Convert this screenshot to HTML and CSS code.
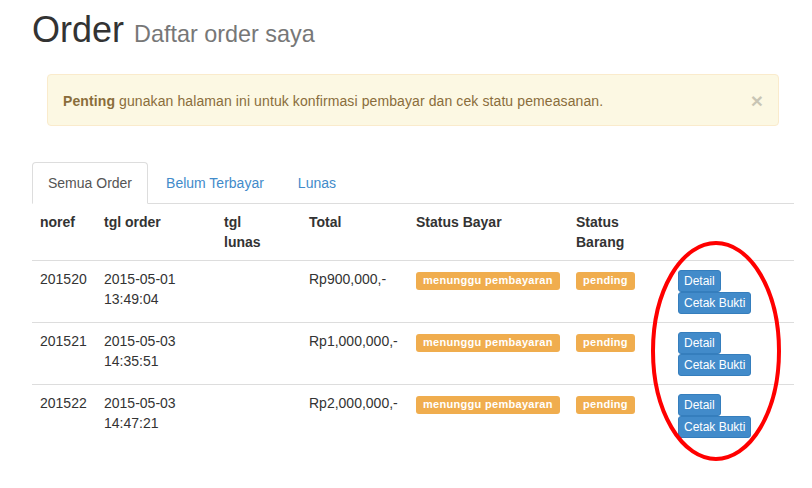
FILE: index.html
```html
<!DOCTYPE html>
<html>
<head>
<meta charset="utf-8">
<title>Order</title>
<link rel="stylesheet" href="styles.css">
</head>
<body>
<div class="page">
  <h1 class="title">Order <small>Daftar order saya</small></h1>

  <div class="alert">
    <span><strong>Penting</strong> gunakan halaman ini untuk konfirmasi pembayar dan cek statu pemeasanan.</span>
    <span class="close">&times;</span>
  </div>

  <ul class="tabs">
    <li class="tab active"><a>Semua Order</a></li>
    <li class="tab"><a>Belum Terbayar</a></li>
    <li class="tab"><a>Lunas</a></li>
  </ul>

  <table class="orders">
    <colgroup>
      <col class="c1"><col class="c2"><col class="c3"><col class="c4"><col class="c5"><col class="c6"><col class="c7">
    </colgroup>
    <tr class="head">
      <th>noref</th>
      <th>tgl order</th>
      <th>tgl<br>lunas</th>
      <th>Total</th>
      <th>Status Bayar</th>
      <th>Status<br>Barang</th>
      <th></th>
    </tr>
    <tr>
      <td>201520</td>
      <td>2015-05-01<br>13:49:04</td>
      <td></td>
      <td>Rp900,000,-</td>
      <td><span class="label">menunggu pembayaran</span></td>
      <td><span class="label">pending</span></td>
      <td><div class="actions"><span class="btn">Detail</span><span class="btn">Cetak Bukti</span></div></td>
    </tr>
    <tr>
      <td>201521</td>
      <td>2015-05-03<br>14:35:51</td>
      <td></td>
      <td>Rp1,000,000,-</td>
      <td><span class="label">menunggu pembayaran</span></td>
      <td><span class="label">pending</span></td>
      <td><div class="actions"><span class="btn">Detail</span><span class="btn">Cetak Bukti</span></div></td>
    </tr>
    <tr>
      <td>201522</td>
      <td>2015-05-03<br>14:47:21</td>
      <td></td>
      <td>Rp2,000,000,-</td>
      <td><span class="label">menunggu pembayaran</span></td>
      <td><span class="label">pending</span></td>
      <td><div class="actions"><span class="btn">Detail</span><span class="btn">Cetak Bukti</span></div></td>
    </tr>
  </table>
</div>

<svg class="annotation" width="812" height="488" viewBox="0 0 812 488" xmlns="http://www.w3.org/2000/svg">
  <ellipse cx="716" cy="351" rx="63" ry="108" fill="none" stroke="#ff0000" stroke-width="4"/>
</svg>
</body>
</html>
```

FILE: styles.css
```css
html, body {
  margin: 0;
  padding: 0;
  background: #fff;
}

body {
  font-family: "Liberation Sans", Arial, Helvetica, sans-serif;
  font-size: 14px;
  line-height: 20px;
  color: #333;
  position: relative;
  width: 812px;
  height: 488px;
  overflow: hidden;
}

.page {
  margin-left: 32px;
  width: 762px;
}

.title {
  margin: 10px 0 24px 0;
  height: 40px;
  font-size: 36px;
  font-weight: normal;
  line-height: 40px;
  color: #333;
}

.title small {
  font-size: 65%;
  line-height: 1;
  color: #777;
}

.alert {
  margin: 0 15px 36px 15px;
  padding: 15px 15px 14px 15px;
  border: 1px solid #faebcc;
  border-radius: 4px;
  background: #fcf8e3;
  color: #8a6d3b;
  display: flex;
  justify-content: space-between;
  align-items: center;
  letter-spacing: 0.1px;
}

.alert strong {
  font-weight: bold;
}

.close {
  font-size: 21px;
  font-weight: bold;
  line-height: 1;
  color: #000;
  opacity: 0.2;
}

.tabs {
  list-style: none;
  margin: 0;
  padding: 0;
  display: flex;
  border-bottom: 1px solid #ddd;
}

.tab {
  margin-bottom: -1px;
}

.tab a {
  display: block;
  padding: 10px 15px;
  margin-right: 2px;
  line-height: 20px;
  border: 1px solid transparent;
  border-radius: 4px 4px 0 0;
  color: #428bca;
}

.tab.active a {
  color: #555;
  background: #fff;
  border-color: #ddd #ddd transparent #ddd;
}

.orders {
  width: 762px;
  border-collapse: collapse;
  table-layout: fixed;
}

.c1 { width: 64px; }
.c2 { width: 120px; }
.c3 { width: 85px; }
.c4 { width: 107px; }
.c5 { width: 160px; }
.c6 { width: 102px; }
.c7 { width: 124px; }

.orders th,
.orders td {
  padding: 8px;
  text-align: left;
  vertical-align: top;
  line-height: 20px;
}

.orders th {
  font-weight: bold;
}

.orders td {
  border-top: 1px solid #ddd;
}

.label {
  display: inline-block;
  margin-top: 3px;
  padding: 3px 7px 4px 7px;
  font-size: 11px;
  line-height: 11px;
  font-weight: bold;
  letter-spacing: 0.3px;
  color: #fff;
  background: #f0ad4e;
  border-radius: 3px;
  white-space: nowrap;
}

.actions {
  display: flex;
  flex-direction: column;
  align-items: flex-start;
  padding-top: 1px;
}

.btn {
  display: inline-block;
  padding: 1px 5px;
  font-size: 12px;
  line-height: 18px;
  color: #fff;
  background: #428bca;
  border: 1px solid #357ebd;
  border-radius: 3px;
  white-space: nowrap;
}

.annotation {
  position: absolute;
  left: 0;
  top: 0;
  pointer-events: none;
}
```
